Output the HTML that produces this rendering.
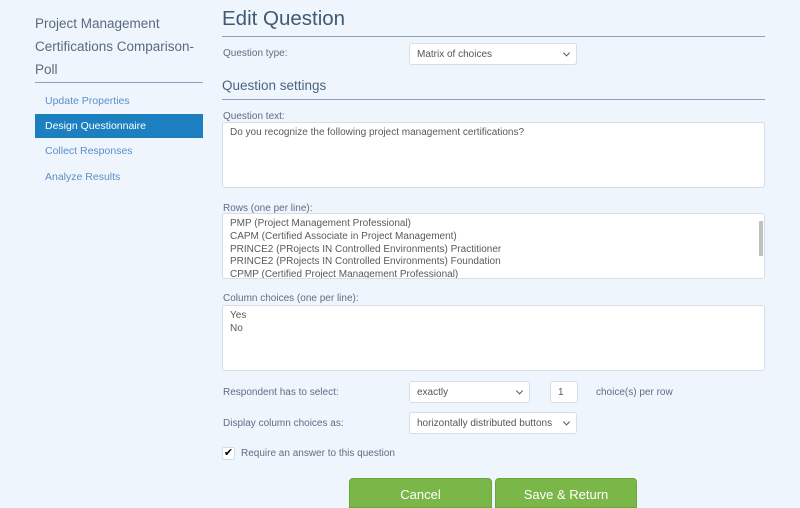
<!DOCTYPE html>
<html><head><style>
*{box-sizing:border-box;margin:0;padding:0}
body{width:800px;height:500px;overflow:hidden;background:#eef5fd;font-family:"Liberation Sans",sans-serif;color:#5a6b7d;position:relative}
.a{position:absolute;white-space:nowrap}
.hr{position:absolute;height:1px;background:#8aa3bb}
.lbl{font-size:10px;color:#5d6f82}
.box{position:absolute;background:#fff;border:1px solid #d6dde4;border-radius:3px;font-size:10px;color:#5a5a5a;padding:5px 7px;line-height:12.8px}
.sel{position:absolute;background:#fff;border:1px solid #d6dde4;border-radius:3px;font-size:10px;color:#555;padding:0 7px;display:flex;align-items:center}
.sel.c:after{content:"";position:absolute;right:7px;top:50%;width:4px;height:4px;border-right:1px solid #555;border-bottom:1px solid #555;transform:translateY(-70%) rotate(45deg)}
.menu{font-size:10.5px;color:#5b8fc9;left:45px}
.btn{position:absolute;background:#7ab648;color:#fff;font-size:13px;text-align:center;border-radius:4px 4px 0 0;top:478px;height:30px;padding-top:8px;border:1px solid #6aa63a}
</style></head><body>
<div class="a" style="left:35px;top:12px;font-size:13.5px;line-height:23px;color:#5a6b7d">Project Management<br>Certifications Comparison-<br>Poll</div>
<div class="hr" style="left:35px;top:82px;width:168px"></div>
<div class="a menu" style="top:95px">Update Properties</div>
<div class="a" style="left:35px;top:114px;width:168px;height:24px;background:#1b7fc0"></div>
<div class="a menu" style="top:120px;color:#fff">Design Questionnaire</div>
<div class="a menu" style="top:145px">Collect Responses</div>
<div class="a menu" style="top:171px">Analyze Results</div>

<div class="a" style="left:222px;top:7px;font-size:20.5px;color:#3f5a76">Edit Question</div>
<div class="hr" style="left:222px;top:36px;width:543px"></div>
<div class="a lbl" style="left:223px;top:48px">Question type:</div>
<div class="sel c" style="left:409px;top:43px;width:168px;height:22px">Matrix of choices</div>
<div class="a" style="left:222px;top:78px;font-size:13.5px;color:#4c6580">Question settings</div>
<div class="hr" style="left:222px;top:99px;width:543px"></div>
<div class="a lbl" style="left:223px;top:111px">Question text:</div>
<div class="box" style="left:222px;top:122px;width:543px;height:66px;padding-top:4px">Do you recognize the following project management certifications?</div>
<div class="a lbl" style="left:223px;top:203px">Rows (one per line):</div>
<div class="box" style="left:222px;top:213px;width:543px;height:66px;overflow:hidden;padding-top:4px">PMP (Project Management Professional)<br>CAPM (Certified Associate in Project Management)<br>PRINCE2 (PRojects IN Controlled Environments) Practitioner<br>PRINCE2 (PRojects IN Controlled Environments) Foundation<br>CPMP (Certified Project Management Professional)
<div style="position:absolute;right:1px;top:7px;width:4px;height:35px;background:#c1c1c1"></div></div>
<div class="a lbl" style="left:223px;top:293px">Column choices (one per line):</div>
<div class="box" style="left:222px;top:305px;width:543px;height:66px;padding-top:4px">Yes<br>No</div>
<div class="a lbl" style="left:223px;top:387px">Respondent has to select:</div>
<div class="sel c" style="left:409px;top:381px;width:121px;height:22px">exactly</div>
<div class="sel" style="left:550px;top:381px;width:28px;height:22px;">1</div>
<div class="a lbl" style="left:596px;top:387px">choice(s) per row</div>
<div class="a lbl" style="left:223px;top:418px">Display column choices as:</div>
<div class="sel c" style="left:409px;top:412px;width:168px;height:22px">horizontally distributed buttons</div>
<div class="a" style="left:222px;top:447px;width:13px;height:13px;background:#fff;border:1px solid #d6dde4;border-radius:2px;font-size:11px;color:#000;line-height:11px;text-align:center">✔</div>
<div class="a lbl" style="left:241px;top:448px">Require an answer to this question</div>
<div class="btn" style="left:349px;width:143px">Cancel</div>
<div class="btn" style="left:495px;width:142px">Save &amp; Return</div>
</body></html>
